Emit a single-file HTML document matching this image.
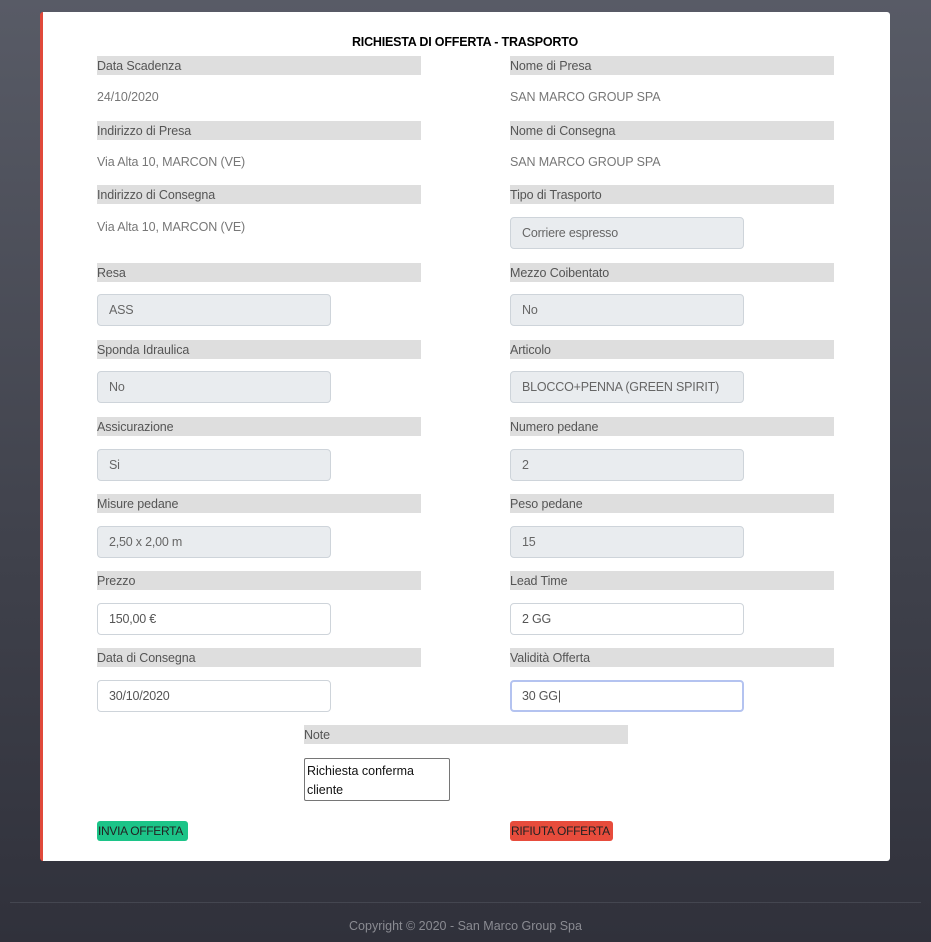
<!DOCTYPE html>
<html><head><meta charset="utf-8"><style>
*{margin:0;padding:0;box-sizing:border-box}
body{width:931px;height:942px;overflow:hidden;background:linear-gradient(#585b66,#3f414b 60%,#30313b);font-family:"Liberation Sans",sans-serif;font-size:12.5px;position:relative}
.card{position:absolute;left:40px;top:12px;width:850px;height:849px;background:#fff;border-left:3px solid #e0493b;border-radius:3px}
.a{position:absolute}
.lbl{position:absolute;height:19px;width:324px;background:#dedede;color:#555;line-height:20px;font-size:12.5px;letter-spacing:-0.1px}
.val{position:absolute;color:#777;font-size:12.5px;letter-spacing:-0.1px}
.inp{position:absolute;width:234px;height:32px;border:1px solid #ced4da;border-radius:4px;background:#e9ecef;color:#666;padding-left:11px;line-height:31px;font-size:12.5px;letter-spacing:-0.2px;white-space:nowrap;overflow:hidden}
.w{background:#fff;color:#555}
.btn{position:absolute;top:821px;height:20px;line-height:20px;border-radius:3px;font-size:12px;color:#222;padding:0 1px;letter-spacing:-0.3px;white-space:nowrap}
</style></head><body>
<div class="card"></div>
<div class="a" style="left:40px;top:35px;width:850px;text-align:center;font-weight:bold;font-size:12.5px;letter-spacing:-0.2px">RICHIESTA DI OFFERTA - TRASPORTO</div>

<div class="lbl" style="left:97px;top:56px">Data Scadenza</div>
<div class="lbl" style="left:510px;top:56px">Nome di Presa</div>
<div class="val" style="left:97px;top:90px">24/10/2020</div>
<div class="val" style="left:510px;top:90px">SAN MARCO GROUP SPA</div>

<div class="lbl" style="left:97px;top:121px">Indirizzo di Presa</div>
<div class="lbl" style="left:510px;top:121px">Nome di Consegna</div>
<div class="val" style="left:97px;top:155px">Via Alta 10, MARCON (VE)</div>
<div class="val" style="left:510px;top:155px">SAN MARCO GROUP SPA</div>

<div class="lbl" style="left:97px;top:185px">Indirizzo di Consegna</div>
<div class="lbl" style="left:510px;top:185px">Tipo di Trasporto</div>
<div class="val" style="left:97px;top:220px">Via Alta 10, MARCON (VE)</div>
<div class="inp" style="left:510px;top:217px">Corriere espresso</div>

<div class="lbl" style="left:97px;top:263px">Resa</div>
<div class="lbl" style="left:510px;top:263px">Mezzo Coibentato</div>
<div class="inp" style="left:97px;top:294px">ASS</div>
<div class="inp" style="left:510px;top:294px">No</div>

<div class="lbl" style="left:97px;top:340px">Sponda Idraulica</div>
<div class="lbl" style="left:510px;top:340px">Articolo</div>
<div class="inp" style="left:97px;top:371px">No</div>
<div class="inp" style="left:510px;top:371px">BLOCCO+PENNA (GREEN SPIRIT)</div>

<div class="lbl" style="left:97px;top:417px">Assicurazione</div>
<div class="lbl" style="left:510px;top:417px">Numero pedane</div>
<div class="inp" style="left:97px;top:449px">Si</div>
<div class="inp" style="left:510px;top:449px">2</div>

<div class="lbl" style="left:97px;top:494px">Misure pedane</div>
<div class="lbl" style="left:510px;top:494px">Peso pedane</div>
<div class="inp" style="left:97px;top:526px">2,50 x 2,00 m</div>
<div class="inp" style="left:510px;top:526px">15</div>

<div class="lbl" style="left:97px;top:571px">Prezzo</div>
<div class="lbl" style="left:510px;top:571px">Lead Time</div>
<div class="inp w" style="left:97px;top:603px">150,00 €</div>
<div class="inp w" style="left:510px;top:603px">2 GG</div>

<div class="lbl" style="left:97px;top:648px">Data di Consegna</div>
<div class="lbl" style="left:510px;top:648px">Validità Offerta</div>
<div class="inp w" style="left:97px;top:680px">30/10/2020</div>
<div class="inp w" style="left:510px;top:680px;border:2px solid #b4c3f0;padding-left:10px;line-height:29px">30 GG|</div>

<div class="lbl" style="left:304px;top:725px">Note</div>
<div class="a" style="left:304px;top:758px;width:146px;height:43px;border:1px solid #767676;border-radius:2px;padding:3px 2px;font-size:12.5px;line-height:19px;color:#111">Richiesta conferma cliente</div>

<div class="btn" style="left:97px;width:91px;background:#1cc488">INVIA OFFERTA</div>
<div class="btn" style="left:510px;width:103px;background:#e74c3c">RIFIUTA OFFERTA</div>

<div class="a" style="left:10px;top:902px;width:911px;height:1px;background:#444650"></div>
<div class="a" style="left:0;top:919px;width:931px;text-align:center;color:#8a8b92;font-size:12.5px">Copyright © 2020 - San Marco Group Spa</div>
</body></html>
